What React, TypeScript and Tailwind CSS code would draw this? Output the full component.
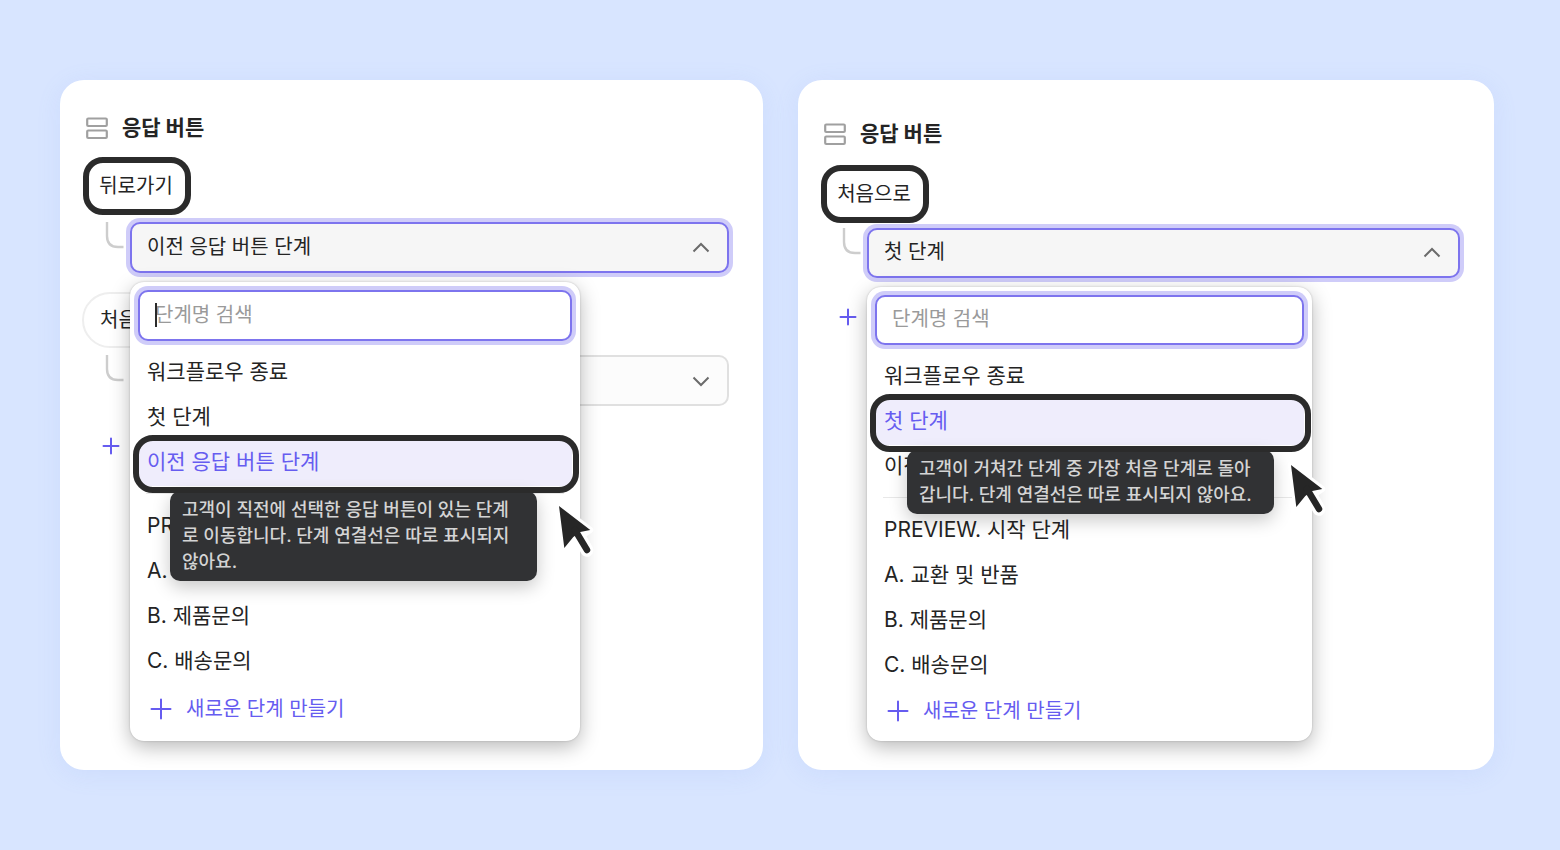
import type { ReactNode } from 'react'

type Step = { label: string; selected?: boolean }

const STEPS = ['PREVIEW. 시작 단계', 'A. 교환 및 반품', 'B. 제품문의', 'C. 배송문의']

const FOCUS_RING =
  'border-2 border-[#7d74ee] shadow-[0_0_0_4px_#cfccf9] outline-none'

const RowsIcon = () => (
  <svg width="24" height="24" viewBox="0 0 24 24" fill="none" stroke="#a0a0a0" strokeWidth="2.2" aria-hidden="true">
    <rect x="2.2" y="2.500" width="19.6" height="7.500" rx="1" />
    <rect x="2.2" y="14.500" width="19.6" height="7.500" rx="1" />
  </svg>
)

const Elbow = () => (
  <svg width="20" height="28" viewBox="0 0 20 28" fill="none" stroke="#cdcdcd" strokeWidth="2.4" aria-hidden="true">
    <path d="M2 0v14q0 11 11 11H18.500" />
  </svg>
)

const Chevron = ({ up = false }) => (
  <svg width="18" height="12" viewBox="0 0 18 12" fill="none" stroke="#6b6b6b" strokeWidth="2" aria-hidden="true">
    <path d={up ? 'M1.500 9.500 9 2l7.500 7.500' : 'M1.500 2.500 9 10l7.500-7.500'} />
  </svg>
)

const Plus = ({ size, weight }: { size: number; weight: number }) => (
  <svg width={size} height={size} viewBox={`0 0 ${size} ${size}`} stroke="#665cf0" strokeWidth={weight} strokeLinecap="round" aria-hidden="true">
    <path d={`M${size / 2} 1.500V${size - 1.5}M1.500 ${size / 2}H${size - 1.5}`} />
  </svg>
)

const Cursor = () => (
  <svg width="46" height="60" viewBox="0 0 46 60" aria-hidden="true">
    <g fill="#fff" stroke="#fff" strokeLinejoin="round" strokeLinecap="round">
      <path d="M7 6 38.300 30 12.300 48Z" strokeWidth="6" />
      <path d="M24 31 35 50.300" strokeWidth="13" />
    </g>
    <g fill="#262626">
      <path d="M7 6 38.300 30 28.300 32 21.300 37 12.300 48Z" />
      <path d="M23 30 35 50" stroke="#262626" strokeWidth="6.500" strokeLinecap="round" />
    </g>
  </svg>
)

const StepSelect = ({ id, label, value, open = false, height }) => (
  <div className="relative">
    <label htmlFor={id} className="sr-only">
      {label}
    </label>
    <select
      id={id}
      defaultValue={value}
      className={`block w-full appearance-none rounded-[10px] pr-12 pb-[2px] pl-[15px] text-[20px] ${height} ${
        open ? `bg-[#f6f6f6] ${FOCUS_RING}` : 'border-2 border-[#e0e0e0] bg-[#fcfcfc]'
      }`}
    >
      <option>{value}</option>
    </select>
    <span className="pointer-events-none absolute inset-y-0 right-[19px] flex items-center">
      <Chevron up={open} />
    </span>
  </div>
)

const Tooltip = ({ children }) => (
  <div
    role="tooltip"
    className="absolute top-[52px] left-8 w-[367px] rounded-[10px] bg-[#313234] px-3 py-[6px] text-[18px] leading-[26px] font-medium text-[#d4d4d4] shadow-[0_6px_18px_rgba(0,0,0,0.22)]"
  >
    {children}
  </div>
)

const MenuItem = ({ step, tooltip }: { step: Step; tooltip: ReactNode }) => {
  if (!step.selected) {
    return (
      <li>
        <button type="button" className="flex h-[45px] w-full items-center px-[9px]">
          {step.label}
        </button>
      </li>
    )
  }

  return (
    <li className="relative z-10">
      <button
        type="button"
        className="flex h-[45px] w-full items-center rounded-lg bg-[#efedfc] px-[9px] text-[#665cf0] shadow-[0_2px_0_#efedfc]"
      >
        {step.label}
      </button>
      <Tooltip>{tooltip}</Tooltip>
      <div className="pointer-events-none absolute -top-1 -right-[7px] -bottom-[9px] -left-[5px] rounded-[20px] border-6 border-[#2b2b2b]" />
      <div className="pointer-events-none absolute top-[61px] -right-[26px]">
        <Cursor />
      </div>
    </li>
  )
}

const StepMenu = ({ id, top, tooltip, width, searchHeight, createHeight, caret = false }) => (
  <div
    className={`relative mt-[9px] rounded-[14px] bg-white px-2 pt-2 pb-[7px] shadow-[0_0_2px_rgba(0,0,0,0.22),0_6px_20px_rgba(0,0,0,0.28)] [grid-area:1/1] ${width}`}
  >
    <div className="relative mb-2">
      <label htmlFor={id} className="sr-only">
        단계명 검색
      </label>
      <input
        id={id}
        type="text"
        placeholder="단계명 검색"
        className={`block w-full rounded-[10px] bg-white px-[15px] pb-[2px] text-[20px] placeholder:text-[#9a9a9a] ${searchHeight} ${FOCUS_RING}`}
      />
      {caret && <span className="absolute top-[13px] left-[17px] h-6 w-0.5 bg-[#2b2b2b]" />}
    </div>
    <ul className="text-[21px]">
      {top.map((step: Step) => (
        <MenuItem key={step.label} step={step} tooltip={tooltip} />
      ))}
    </ul>
    <hr className="mx-2 my-[9px] border-[#e8e8e8]" />
    <ul className="text-[21px]">
      {STEPS.map((label) => (
        <MenuItem key={label} step={{ label }} tooltip={null} />
      ))}
    </ul>
    <button
      type="button"
      className={`flex w-full items-center gap-[14px] px-3 text-[20px] text-[#665cf0] ${createHeight}`}
    >
      <Plus size={22} weight={2} />
      새로운 단계 만들기
    </button>
  </div>
)

const Heading = () => (
  <div className="flex h-8 items-center gap-[13px] px-[25px]">
    <RowsIcon />
    <h2 className="text-[21px] font-bold">응답 버튼</h2>
  </div>
)

const OutlinedPill = ({ children }) => (
  <button
    type="button"
    className="ml-[23px] h-[58px] w-[108px] rounded-[20px] border-6 border-[#2b2b2b] bg-white pr-[2px] text-[20px]"
  >
    {children}
  </button>
)

const AddButton = () => (
  <button type="button" aria-label="버튼 추가" className="block">
    <Plus size={18} weight={2} />
  </button>
)

const CARD = 'rounded-3xl bg-white pb-[29px] shadow-[0_4px_24px_rgba(120,160,240,0.12)]'

const App = () => {
  return (
    <main className="flex min-h-screen items-start gap-[35px] bg-[#d8e5ff] py-20 pr-[66px] pl-[60px] font-['Inter','Noto_Sans_CJK_KR',sans-serif] text-[#242424]">
      <section className={`min-w-0 flex-[703] pt-8 ${CARD}`}>
        <Heading />
        <div className="mt-[13px]">
          <OutlinedPill>뒤로가기</OutlinedPill>
        </div>
        <div className="mt-[7px] flex pr-[34px] pl-[45px]">
          <Elbow />
          <div className="ml-[5px] flex-1">
            <StepSelect id="back-step" label="뒤로가기" value="이전 응답 버튼 단계" height="h-[51px]" open />
          </div>
        </div>
        <div className="grid">
          <div className="[grid-area:1/1]">
            <button
              type="button"
              className="mt-[19px] ml-[22px] block h-[56px] rounded-full border-2 border-[#eeeeee] px-4 text-[20px]"
            >
              처음으로
            </button>
            <div className="mt-[7px] flex pr-[34px] pl-[45px]">
              <Elbow />
              <div className="ml-[5px] flex-1">
                <StepSelect id="first-step" label="처음으로" value="첫 단계" height="h-[51px]" />
              </div>
            </div>
            <div className="mt-[31px] pl-[42px]">
              <AddButton />
            </div>
          </div>
          <StepMenu
            id="back-search"
            width="ml-[70px] w-[450px]"
            searchHeight="h-[51px]"
            createHeight="h-[51px]"
            caret
            top={[
              { label: '워크플로우 종료' },
              { label: '첫 단계' },
              { label: '이전 응답 버튼 단계', selected: true },
            ]}
            tooltip={
              <>
                고객이 직전에 선택한 응답 버튼이 있는 단계
                <br />
                로 이동합니다. 단계 연결선은 따로 표시되지
                <br />
                않아요.
              </>
            }
          />
        </div>
      </section>

      <section className={`min-w-0 flex-[696] pt-[38px] ${CARD}`}>
        <Heading />
        <div className="mt-[15px]">
          <OutlinedPill>처음으로</OutlinedPill>
        </div>
        <div className="mt-[5px] flex pr-[34px] pl-[44px]">
          <Elbow />
          <div className="ml-[5px] flex-1">
            <StepSelect id="home-step" label="처음으로" value="첫 단계" height="h-[50px]" open />
          </div>
        </div>
        <div className="grid">
          <div className="pt-[30px] pl-[41px] [grid-area:1/1]">
            <AddButton />
          </div>
          <StepMenu
            id="home-search"
            width="ml-[69px] w-[445px]"
            searchHeight="h-[50px]"
            createHeight="h-[47px]"
            top={[
              { label: '워크플로우 종료' },
              { label: '첫 단계', selected: true },
              { label: '이전 응답 버튼 단계' },
            ]}
            tooltip={
              <>
                고객이 거쳐간 단계 중 가장 처음 단계로 돌아
                <br />
                갑니다. 단계 연결선은 따로 표시되지 않아요.
              </>
            }
          />
        </div>
      </section>
    </main>
  )
}

export default App
